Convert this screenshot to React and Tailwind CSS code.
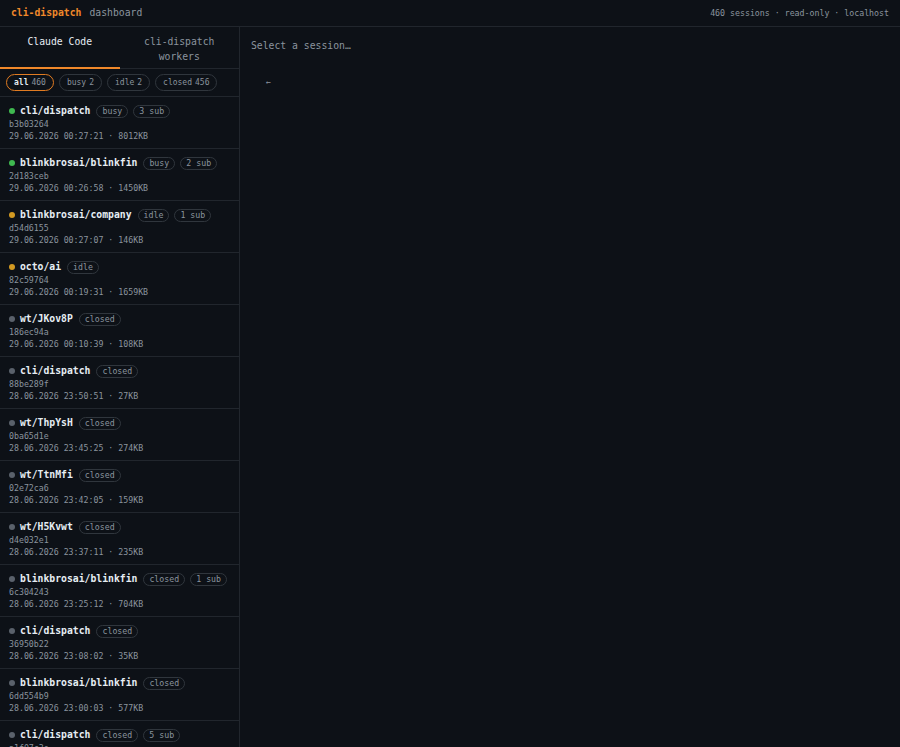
import React, { useState } from "react";

const sessions = [
  { st: "busy", name: "cli/dispatch", sub: 3, id: "b3b03264", at: "29.06.2026 00:27:21", size: "8012KB" },
  { st: "busy", name: "blinkbrosai/blinkfin", sub: 2, id: "2d183ceb", at: "29.06.2026 00:26:58", size: "1450KB" },
  { st: "idle", name: "blinkbrosai/company", sub: 1, id: "d54d6155", at: "29.06.2026 00:27:07", size: "146KB" },
  { st: "idle", name: "octo/ai", id: "82c59764", at: "29.06.2026 00:19:31", size: "1659KB" },
  { st: "closed", name: "wt/JKov8P", id: "186ec94a", at: "29.06.2026 00:10:39", size: "108KB" },
  { st: "closed", name: "cli/dispatch", id: "88be289f", at: "28.06.2026 23:50:51", size: "27KB" },
  { st: "closed", name: "wt/ThpYsH", id: "0ba65d1e", at: "28.06.2026 23:45:25", size: "274KB" },
  { st: "closed", name: "wt/TtnMfi", id: "02e72ca6", at: "28.06.2026 23:42:05", size: "159KB" },
  { st: "closed", name: "wt/H5Kvwt", id: "d4e032e1", at: "28.06.2026 23:37:11", size: "235KB" },
  { st: "closed", name: "blinkbrosai/blinkfin", sub: 1, id: "6c304243", at: "28.06.2026 23:25:12", size: "704KB" },
  { st: "closed", name: "cli/dispatch", id: "36950b22", at: "28.06.2026 23:08:02", size: "35KB" },
  { st: "closed", name: "blinkbrosai/blinkfin", id: "6dd554b9", at: "28.06.2026 23:00:03", size: "577KB" },
  { st: "closed", name: "cli/dispatch", sub: 5, id: "a1f07c3e", at: "28.06.2026 22:51:40", size: "412KB" },
];

const filters = [
  { key: "all", n: 460 },
  { key: "busy", n: 2 },
  { key: "idle", n: 2 },
  { key: "closed", n: 456 },
];

function Dot({ st }) {
  if (st === "busy") return <span className="w-[6px] h-[6px] rounded-full bg-[#3fb950] shrink-0" />;
  if (st === "idle") return <span className="w-[6px] h-[6px] rounded-full bg-[#d29922] shrink-0" />;
  return <span className="w-[6px] h-[6px] rounded-full bg-[#5a616b] shrink-0" />;
}

function Badge({ children }) {
  return (
    <span className="h-[13px] px-[5px] rounded-full border border-[#30363d] text-[8.25px] leading-[11px] text-[#8b949e] flex items-center">
      {children}
    </span>
  );
}

function App() {
  const [tab, setTab] = useState("claude");
  const [filter, setFilter] = useState("all");

  return (
    <div
      className="h-screen flex flex-col bg-[#0d1117] text-[#c9d1d9] overflow-hidden"
      style={{ fontFamily: '"DejaVu Sans Mono", "Liberation Mono", monospace' }}
    >
      <header className="h-[27px] shrink-0 border-b border-[#21262d] flex items-center justify-between px-[11px]">
        <div className="flex items-center gap-[8px] text-[9.75px]">
          <span className="font-bold text-[#f0882a]">cli-dispatch</span>
          <span className="text-[#8b949e]">dashboard</span>
        </div>
        <div className="text-[8.25px] text-[#8b949e] flex gap-[5px]">
          <span>460 sessions</span>
          <span>· read-only · localhost</span>
        </div>
      </header>

      <div className="flex flex-1 min-h-0">
        <aside className="w-[240px] shrink-0 border-r border-[#21262d] flex flex-col min-h-0">
          <div className="flex border-b border-[#21262d] h-[42px] shrink-0">
            <button
              onClick={() => setTab("claude")}
              className={`w-1/2 px-3 pt-[7px] text-[9.75px] leading-[15px] border-b-2 -mb-px flex flex-col items-center justify-start ${
                tab === "claude" ? "border-[#f0882a] text-[#e6edf3]" : "border-transparent text-[#8b949e]"
              }`}
            >
              <span>Claude Code</span>
            </button>
            <button
              onClick={() => setTab("workers")}
              className={`w-1/2 px-3 pt-[7px] text-[9.75px] leading-[15px] border-b-2 -mb-px flex flex-col items-center justify-start ${
                tab === "workers" ? "border-[#f0882a] text-[#e6edf3]" : "border-transparent text-[#8b949e]"
              }`}
            >
              <span>cli-dispatch</span>
              <span>workers</span>
            </button>
          </div>

          <div className="flex gap-[5px] px-[6px] py-[5px] border-b border-[#21262d] shrink-0">
            {filters.map((f) => (
              <button
                key={f.key}
                onClick={() => setFilter(f.key)}
                className={`h-[17px] px-[7px] rounded-full border flex items-center gap-[3px] text-[8px] ${
                  filter === f.key ? "border-[#e07b22] text-[#e6edf3]" : "border-[#30363d] text-[#8b949e]"
                }`}
              >
                <span className={filter === f.key ? "font-bold" : ""}>{f.key}</span>
                <span className="text-[#8b949e]">{f.n}</span>
              </button>
            ))}
          </div>

          <div className="flex-1 overflow-hidden">
            {sessions.map((s, i) => (
              <div key={i} className="h-[52px] border-b border-[#21262d] pl-[9px] pr-2 pt-[7px]">
                <div className="flex items-center gap-[5px] h-[14px]">
                  <Dot st={s.st} />
                  <span className="font-bold text-[9.75px] leading-[14px] text-[#e6edf3] mr-[1px]">{s.name}</span>
                  <Badge>{s.st}</Badge>
                  {s.sub ? <Badge>{s.sub} sub</Badge> : null}
                </div>
                <div className="text-[8.25px] leading-[12px] text-[#8b949e]">{s.id}</div>
                <div className="text-[8.25px] leading-[13px] text-[#8b949e]">
                  {s.at} · {s.size}
                </div>
              </div>
            ))}
          </div>
        </aside>

        <main className="flex-1 px-[11px] pt-[12px]">
          <div className="text-[9.75px] text-[#8b949e]">Select a session…</div>
          <div className="mt-[22px] pl-[15px] text-[8.25px] text-[#8b949e]">←</div>
        </main>
      </div>
    </div>
  );
}

export default App;
